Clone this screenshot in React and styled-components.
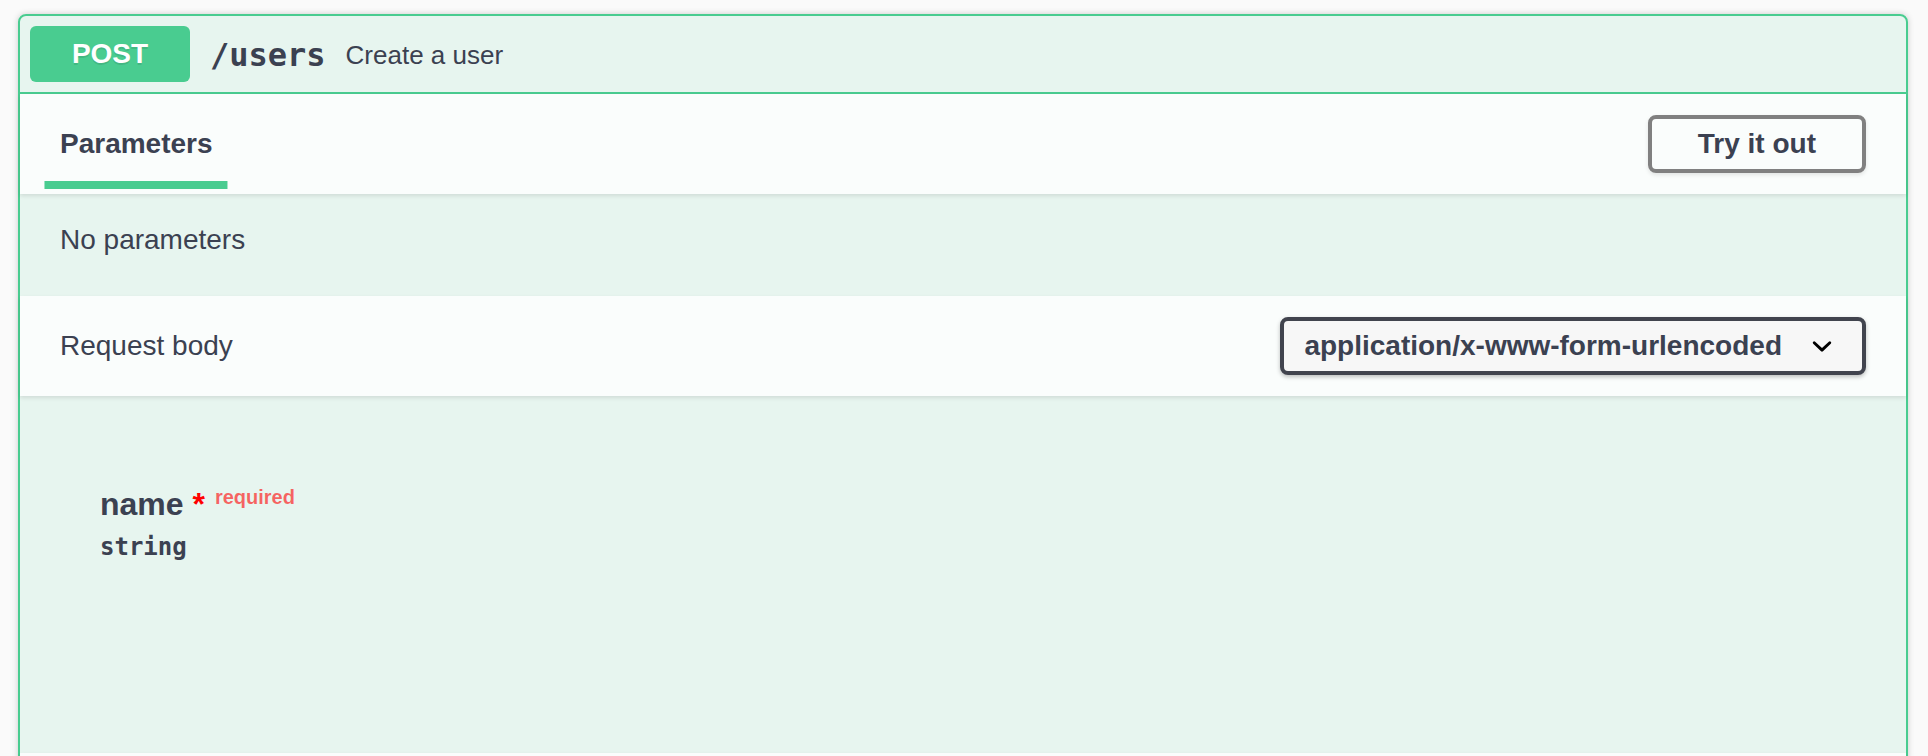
import React from "react";
import styled, { createGlobalStyle } from "styled-components";

const GlobalStyle = createGlobalStyle`
  html, body {
    margin: 0;
    padding: 0;
    background: #fafafa;
    overflow: hidden;
  }
  body {
    font-family: "Liberation Sans", Arial, sans-serif;
    color: #3b4151;
  }
  * { box-sizing: border-box; }
`;

const Page = styled.div`
  height: 756px;
  overflow: hidden;
  padding: 14px 20px 0 18px;
`;

const Opblock = styled.div`
  border: 2px solid #49cc90;
  border-radius: 8px;
  background: rgba(73, 204, 144, 0.1);
  box-shadow: 0 0 6px rgba(0, 0, 0, 0.19);
`;

const Summary = styled.div`
  display: flex;
  align-items: center;
  padding: 10px;
  border-bottom: 2px solid #49cc90;
`;

const MethodBadge = styled.span`
  min-width: 160px;
  padding: 12px 0;
  border-radius: 6px;
  background: #49cc90;
  color: #fff;
  font-size: 28px;
  line-height: 32px;
  font-weight: 700;
  text-align: center;
  text-shadow: 0 2px 0 rgba(0, 0, 0, 0.1);
`;

const SummaryPath = styled.span`
  font-family: "DejaVu Sans Mono", monospace;
  font-size: 32px;
  font-weight: 700;
  padding: 0 20px;
  color: #3b4151;
  position: relative;
  top: 1px;
`;

const SummaryDescription = styled.span`
  flex: 1 1 auto;
  font-size: 26px;
  color: #3b4151;
  position: relative;
  top: 1px;
`;

const SectionHeader = styled.div`
  display: flex;
  align-items: center;
  min-height: 100px;
  padding: 16px 40px;
  background: rgba(255, 255, 255, 0.8);
  box-shadow: 0 2px 4px rgba(0, 0, 0, 0.1);
`;

const TabList = styled.div`
  flex: 1;
  display: flex;
`;

const TabTitle = styled.h4`
  margin: 0;
  font-size: 28px;
  font-weight: 700;
  color: #3b4151;
`;

const TabLabel = styled.span`
  position: relative;
  &::after {
    content: "";
    position: absolute;
    left: 50%;
    bottom: -30px;
    width: 120%;
    height: 8px;
    transform: translateX(-50%);
    background: ${(p) => (p.$active ? "#49cc90" : "transparent")};
  }
`;

const Button = styled.button`
  font-family: "Liberation Sans", Arial, sans-serif;
  font-size: 28px;
  line-height: 30px;
  font-weight: 700;
  color: #3b4151;
  background: transparent;
  border: 4px solid #808080;
  border-radius: 8px;
  padding: 10px 46px;
  box-shadow: 0 2px 4px rgba(0, 0, 0, 0.1);
  cursor: pointer;
`;

const DescriptionWrapper = styled.div`
  padding: 30px 40px;
`;

const Paragraph = styled.p`
  margin: 0 0 10px;
  font-size: 28px;
  line-height: 32px;
  color: #3b4151;
`;

const SectionTitle = styled.h4`
  flex: 1;
  margin: 0;
  font-size: 28px;
  font-weight: 400;
  color: #3b4151;
`;

const SelectBox = styled.div`
  display: flex;
  align-items: center;
  padding: 10px 20px;
  border: 4px solid #41444e;
  border-radius: 8px;
  background: #f7f7f7;
  box-shadow: 0 2px 4px rgba(0, 0, 0, 0.25);
  font-size: 28px;
  line-height: 30px;
  font-weight: 700;
  color: #3b4151;
  cursor: pointer;
`;

const Chevron = styled.svg`
  width: 40px;
  height: 30px;
  margin-left: 20px;
  flex: none;
`;

const BodyContent = styled.div`
  padding: 90px 80px 182px;
`;

const ParamName = styled.div`
  font-size: 32px;
  line-height: 37px;
  font-weight: 700;
  color: #3b4151;
`;

const Asterisk = styled.span`
  color: red;
`;

const RequiredTag = styled.span`
  position: relative;
  top: -11px;
  padding: 0 10px;
  font-size: 20px;
  color: rgba(255, 0, 0, 0.6);
`;

const ParamType = styled.div`
  padding: 6px 0 10px;
  font-family: "DejaVu Sans Mono", monospace;
  font-size: 24px;
  line-height: 28px;
  font-weight: 700;
  color: #3b4151;
`;

export default function App() {
  return (
    <>
      <GlobalStyle />
      <Page>
        <Opblock>
          <Summary>
            <MethodBadge>POST</MethodBadge>
            <SummaryPath>/users</SummaryPath>
            <SummaryDescription>Create a user</SummaryDescription>
          </Summary>

          <SectionHeader>
            <TabList>
              <TabTitle>
                <TabLabel $active>Parameters</TabLabel>
              </TabTitle>
            </TabList>
            <Button>Try it out</Button>
          </SectionHeader>

          <DescriptionWrapper>
            <Paragraph>No parameters</Paragraph>
          </DescriptionWrapper>

          <SectionHeader>
            <SectionTitle>Request body</SectionTitle>
            <SelectBox>
              <span>application/x-www-form-urlencoded</span>
              <Chevron viewBox="0 2.5 20 15" aria-hidden="true">
                <path
                  fill="#000"
                  d="M13.418 7.859a.695.695 0 0 1 .978 0 .68.68 0 0 1 0 .969l-3.908 3.83a.697.697 0 0 1-.979 0l-3.908-3.83a.68.68 0 0 1 0-.969.695.695 0 0 1 .978 0L10 11l3.418-3.141z"
                />
              </Chevron>
            </SelectBox>
          </SectionHeader>

          <BodyContent>
            <ParamName>
              name<Asterisk>{"\u00a0*"}</Asterisk>
              <RequiredTag>required</RequiredTag>
            </ParamName>
            <ParamType>string</ParamType>
          </BodyContent>

          <SectionHeader />
        </Opblock>
      </Page>
    </>
  );
}
